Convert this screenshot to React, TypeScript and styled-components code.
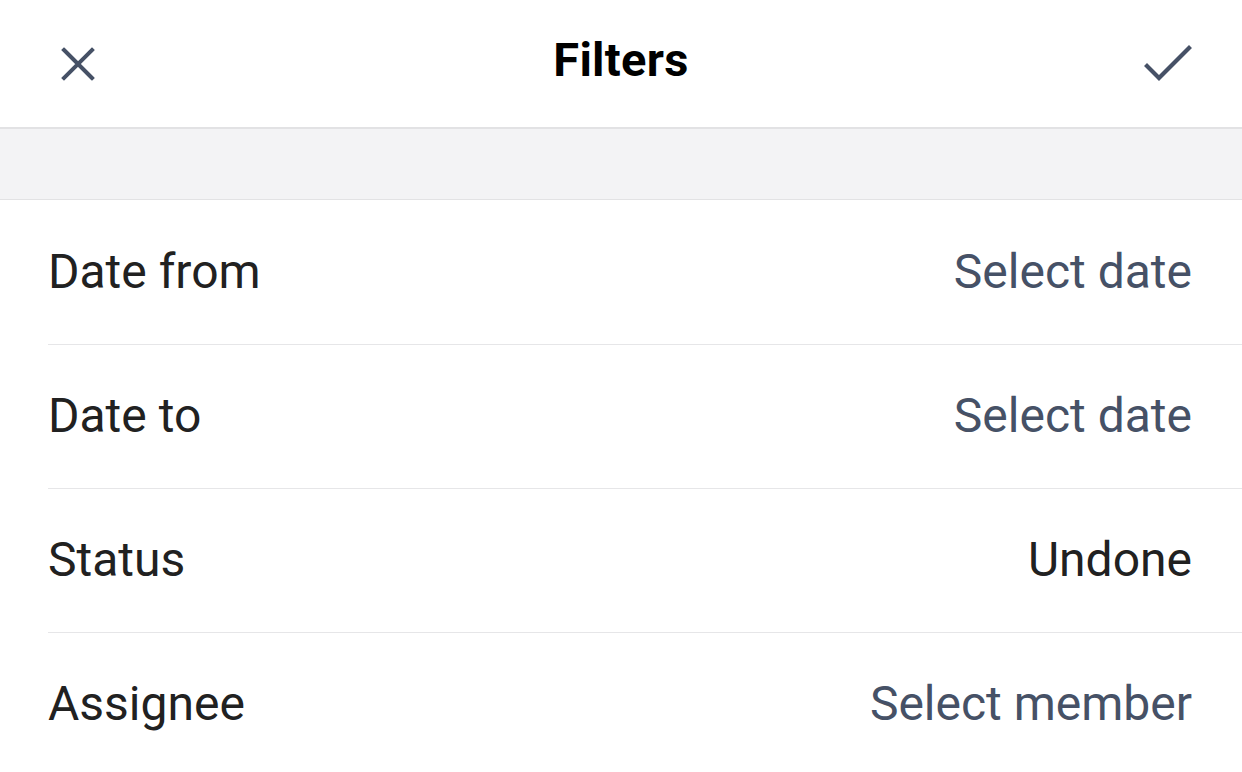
import React from "react";
import styled, { createGlobalStyle } from "styled-components";

const Global = createGlobalStyle`
  html, body { margin: 0; padding: 0; background: #ffffff; }
  body { font-family: Roboto, "Noto Sans", sans-serif; -webkit-font-smoothing: antialiased; }
`;

const Page = styled.div`
  width: 1242px;
  min-height: 772px;
  background: #ffffff;
`;

const Header = styled.header`
  height: 127px;
  display: grid;
  grid-template-columns: 156px 1fr 156px;
  align-items: center;
  border-bottom: 2px solid #e2e2e4;
  box-sizing: content-box;
`;

const IconButton = styled.button<{ $align: "start" | "end" }>`
  background: none;
  border: none;
  padding: 0;
  height: 100%;
  display: flex;
  align-items: center;
  justify-content: ${(p) => (p.$align === "start" ? "flex-start" : "flex-end")};
  padding-left: ${(p) => (p.$align === "start" ? "60px" : "0")};
  padding-right: ${(p) => (p.$align === "end" ? "48px" : "0")};
  cursor: pointer;
`;

const Title = styled.h1`
  margin: 0;
  text-align: center;
  font-family: Roboto, sans-serif;
  font-weight: 700;
  font-size: 47px;
  color: #000000;
  letter-spacing: 0.3px;
  transform: translateY(-4px);
`;

const Band = styled.div`
  height: 70px;
  background: #f3f3f5;
  border-bottom: 1px solid #e2e2e4;
`;

const List = styled.ul`
  list-style: none;
  margin: 1px 0 0 0;
  padding: 0 0 0 48px;
`;

const Row = styled.li<{ $last?: boolean }>`
  height: 143px;
  display: flex;
  align-items: center;
  justify-content: space-between;
  padding-right: 50px;
  border-bottom: ${(p) => (p.$last ? "none" : "1px solid #e6e6e8")};
`;

const Label = styled.span`
  font-family: Roboto, sans-serif;
  font-size: 48px;
  font-weight: 400;
  color: #212121;
  transform: translateY(-1px);
`;

const Value = styled.span<{ $placeholder?: boolean }>`
  font-family: Roboto, sans-serif;
  font-size: 48px;
  font-weight: 400;
  color: ${(p) => (p.$placeholder ? "#465166" : "#212121")};
  transform: translateY(-1px);
`;

const CloseIcon = () => (
  <svg width="36" height="36" viewBox="0 0 36 36" fill="none">
    <path d="M4 4 L32 32 M32 4 L4 32" stroke="#465166" strokeWidth="4" strokeLinecap="square" />
  </svg>
);

const CheckIcon = () => (
  <svg width="50" height="40" viewBox="0 0 50 40" fill="none">
    <path d="M3 22 L15 34 L45 4" stroke="#465166" strokeWidth="4.2" strokeLinecap="square" strokeLinejoin="miter" />
  </svg>
);

const rows = [
  { label: "Date from", value: "Select date", placeholder: true },
  { label: "Date to", value: "Select date", placeholder: true },
  { label: "Status", value: "Undone", placeholder: false },
  { label: "Assignee", value: "Select member", placeholder: true },
];

export default function App() {
  return (
    <Page>
      <Global />
      <Header>
        <IconButton $align="start" aria-label="Close">
          <CloseIcon />
        </IconButton>
        <Title>Filters</Title>
        <IconButton $align="end" aria-label="Apply">
          <CheckIcon />
        </IconButton>
      </Header>
      <Band />
      <List>
        {rows.map((r, i) => (
          <Row key={r.label} $last={i === rows.length - 1}>
            <Label>{r.label}</Label>
            <Value $placeholder={r.placeholder}>{r.value}</Value>
          </Row>
        ))}
      </List>
    </Page>
  );
}
